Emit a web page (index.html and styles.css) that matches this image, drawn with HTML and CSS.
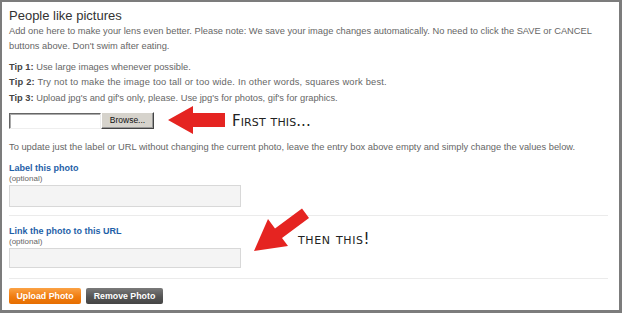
FILE: index.html
```html
<!DOCTYPE html>
<html>
<head>
<meta charset="utf-8">
<link rel="stylesheet" href="styles.css">
</head>
<body>
<div class="panel">
  <h1 class="title">People like pictures</h1>
  <p class="intro">Add one here to make your lens even better. Please note: We save your image changes automatically. No need to click the SAVE or CANCEL<br>buttons above. Don't swim after eating.</p>
  <div class="tips">
    <div><b>Tip 1:</b> Use large images whenever possible.</div>
    <div class="tip-2"><b>Tip 2:</b> Try not to make the image too tall or too wide. In other words, squares work best.</div>
    <div><b>Tip 3:</b> Upload jpg's and gif's only, please. Use jpg's for photos, gif's for graphics.</div>
  </div>
  <div class="file-row">
    <span class="file-text"></span><span class="browse">Browse...</span>
  </div>
  <p class="note">To update just the label or URL without changing the current photo, leave the entry box above empty and simply change the values below.</p>
  <div class="field">
    <div class="label">Label this photo</div>
    <div class="optional">(optional)</div>
    <div class="input"></div>
  </div>
  <div class="field field-2">
    <div class="label">Link the photo to this URL</div>
    <div class="optional">(optional)</div>
    <div class="input"></div>
  </div>
  <div class="buttons">
    <span class="btn btn-orange">Upload Photo</span>
    <span class="btn btn-gray">Remove Photo</span>
  </div>

  <div class="callout callout-1">
    <svg class="arrow" width="58" height="30" viewBox="0 0 58 30">
      <polygon points="0,14 25,0 25,7 57,7 57,21 25,21 25,28" fill="#e52421"/>
    </svg>
    <span class="callout-text"><span class="big">F</span>irst this...</span>
  </div>
  <svg class="arrow-2" width="60" height="50" viewBox="0 0 60 50">
    <polygon points="2,47 16,15 23,24.5 50,4.5 57,14 30,34 36,42" fill="#e52421"/>
  </svg>
  <span class="callout-text callout-2">then this!</span>
</div>
</body>
</html>
```
FILE: styles.css
```css
html, body {
  margin: 0;
  padding: 0;
  background: #fff;
}
.panel {
  position: relative;
  box-sizing: border-box;
  width: 622px;
  height: 313px;
  border-style: solid;
  border-color: #7c7c7c;
  border-width: 2px 3px 3px 2px;
  padding: 6px 11px 0 7px;
  font-family: "Liberation Sans", Arial, sans-serif;
  font-size: 9.3px;
  color: #666;
}
.title {
  margin: 0;
  font-size: 13px;
  line-height: 16px;
  font-weight: normal;
  color: #333;
  letter-spacing: 0;
}
.intro {
  margin: 0;
  line-height: 14.5px;
  white-space: nowrap;
}
.tips {
  margin-top: 6.5px;
  line-height: 15.5px;
}
.tips b {
  color: #444;
}
.tip-2 {
  letter-spacing: 0.2px;
}
.file-row {
  display: flex;
  margin-top: 5.5px;
  height: 17px;
}
.file-text {
  box-sizing: border-box;
  width: 92px;
  height: 16px;
  margin-top: 1px;
  background: #fff;
  border: 1px solid;
  border-color: #666 #eee #eee #666;
  box-shadow: inset 1px 1px 0 #aaa;
}
.browse {
  box-sizing: border-box;
  width: 53px;
  height: 17px;
  background: #d6d3cc;
  border: 1px solid;
  border-color: #fff #444 #444 #fff;
  box-shadow: inset -1px -1px 0 #999;
  color: #111;
  font-size: 8.5px;
  line-height: 15px;
  text-align: center;
}
.note {
  margin: 11px 0 0;
  line-height: 14px;
}
.field {
  padding-top: 8px;
  padding-bottom: 8px;
  border-bottom: 1px solid #ebebeb;
}
.field-2 {
  padding-top: 9px;
  padding-bottom: 10px;
}
.label {
  color: #1f5fa8;
  font-weight: bold;
  font-size: 9px;
  line-height: 12px;
}
.optional {
  font-size: 8px;
  line-height: 9px;
  color: #666;
}
.input {
  box-sizing: border-box;
  width: 232px;
  height: 22px;
  margin-top: 2px;
  background: #f4f4f4;
  border: 1px solid #d8d8d8;
}
.field-2 .input {
  height: 20px;
}
.buttons {
  display: flex;
  gap: 5px;
  margin-top: 9px;
}
.btn {
  box-sizing: border-box;
  height: 16px;
  border-radius: 2px;
  color: #fff;
  font-weight: bold;
  font-size: 8.8px;
  line-height: 16px;
  text-align: center;
}
.btn-orange {
  width: 72px;
  background: linear-gradient(#fba245, #f07c10 55%, #e66e00);
}
.btn-gray {
  width: 77px;
  background: linear-gradient(#7a7a7a, #555 55%, #444);
}
.callout {
  position: absolute;
  display: flex;
  align-items: center;
  gap: 6px;
}
.callout-1 {
  left: 166px;
  top: 104px;
}
.callout-text {
  font-family: "DejaVu Sans", sans-serif;
  font-variant: small-caps;
  font-size: 15px;
  color: #222;
  letter-spacing: 0.6px;
  line-height: 16px;
}
.callout-1 .callout-text {
  letter-spacing: 0.1px;
}
.arrow-2 {
  position: absolute;
  left: 250px;
  top: 202px;
}
.callout-2 {
  position: absolute;
  left: 296px;
  top: 229px;
}
```
